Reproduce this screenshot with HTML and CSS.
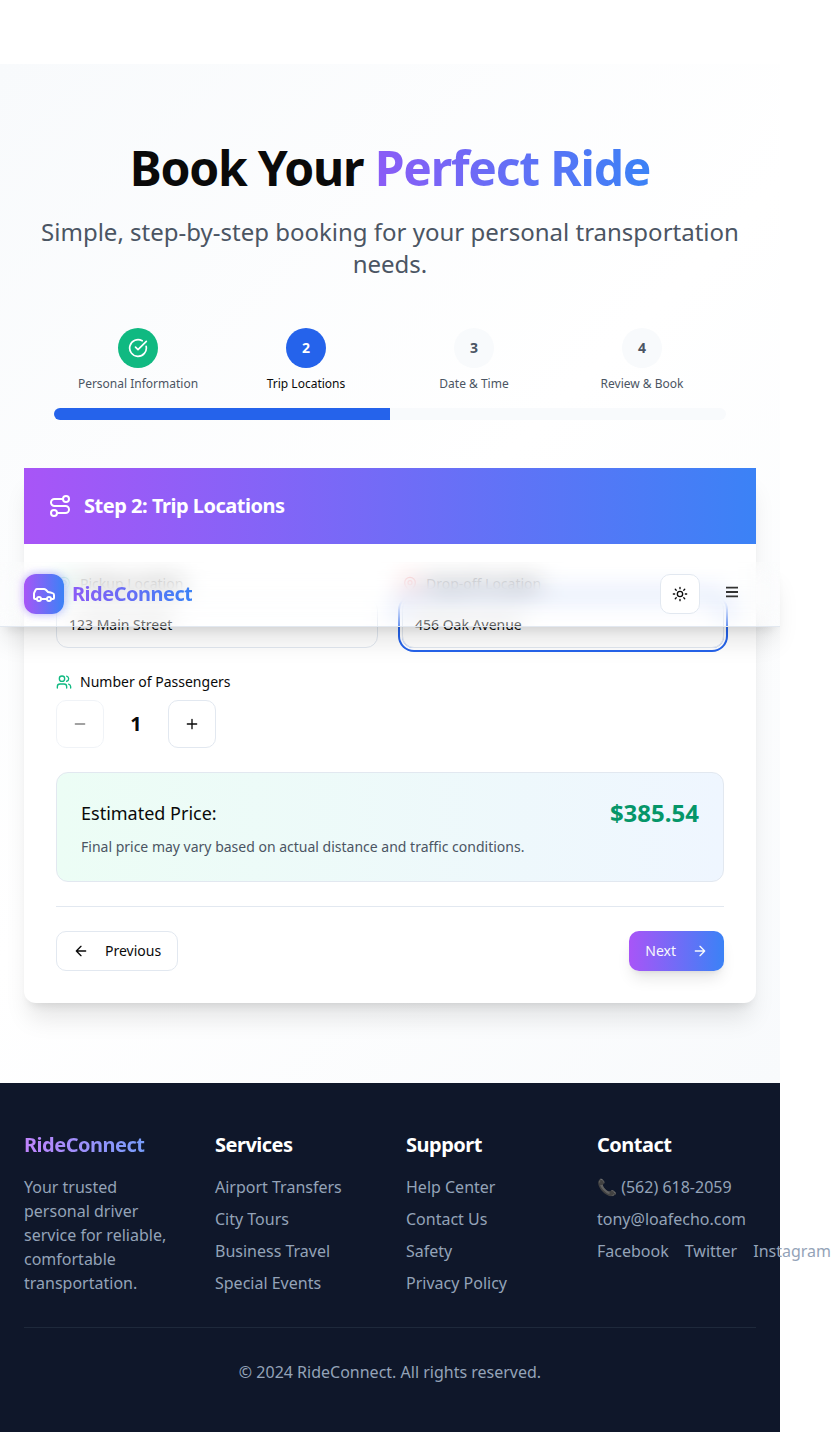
FILE: index.html
```html
<!DOCTYPE html>
<html lang="en">
<head>
<meta charset="utf-8">
<title>RideConnect</title>
<link rel="stylesheet" href="styles.css">
</head>
<body>
<div class="app">
  <header class="navbar">
    <div class="brand"><span class="brand-mark"><svg class="icon s24" viewBox="0 0 24 24"><path d="M19 17h2c.6 0 1-.4 1-1v-3c0-.9-.7-1.700-1.500-1.900C18.700 10.600 16 10 16 10s-1.300-1.400-2.200-2.300c-.5-.4-1.100-.7-1.800-.7H5c-.6 0-1.100.4-1.400.9l-1.400 2.900A3.700 3.700 0 0 0 2 12v4c0 .6.4 1 1 1h2"/><circle cx="7" cy="17" r="2"/><path d="M9 17h6"/><circle cx="17" cy="17" r="2"/></svg></span><span class="brand-name">RideConnect</span></div>
    <div class="nav-actions">
      <button class="theme"><svg class="icon s16" viewBox="0 0 24 24"><circle cx="12" cy="12" r="4"/><path d="M12 2v2M12 20v2M4.930 4.930l1.410 1.410M17.660 17.660l1.410 1.410M2 12h2M20 12h2M6.340 17.660l-1.410 1.410M19.070 4.930l-1.410 1.410"/></svg></button>
      <button class="menu"><svg class="icon s16 bars" viewBox="0 0 24 24"><path d="M3 5.500h18M3 12h18M3 18.500h18"/></svg></button>
    </div>
  </header>
  <main class="booking">
    <h1>Book Your <span>Perfect Ride</span></h1>
    <p class="lead">Simple, step-by-step booking for your personal transportation needs.</p>
    <div class="progress">
      <ol class="steps">
        <li><span class="dot done"><svg class="icon s20" viewBox="0 0 24 24"><path d="M21.801 10A10 10 0 1 1 17 3.335"/><path d="m9 11 3 3L22 4"/></svg></span><span>Personal Information</span></li>
        <li class="current"><span class="dot active">2</span><span>Trip Locations</span></li>
        <li><span class="dot">3</span><span>Date &amp; Time</span></li>
        <li><span class="dot">4</span><span>Review &amp; Book</span></li>
      </ol>
      <div class="track"><div class="fill"></div></div>
    </div>
    <section class="card">
      <div class="card-head"><svg class="icon s24" viewBox="0 0 24 24"><circle cx="6" cy="19" r="3"/><path d="M9 19h8.500a3.500 3.500 0 0 0 0-7h-11a3.500 3.500 0 0 1 0-7H15"/><circle cx="18" cy="5" r="3"/></svg><h2>Step 2: Trip Locations</h2></div>
      <div class="card-body">
        <div class="fields">
          <div class="field"><label><svg class="icon s16 green" viewBox="0 0 24 24"><path d="M20 10c0 5-5.500 10.200-7.400 11.800a1 1 0 0 1-1.200 0C9.500 20.200 4 15 4 10a8 8 0 0 1 16 0"/><circle cx="12" cy="10" r="3"/></svg>Pickup Location</label><div class="input">123 Main Street</div></div>
          <div class="field"><label><svg class="icon s16 red" viewBox="0 0 24 24"><path d="M20 10c0 5-5.500 10.200-7.400 11.800a1 1 0 0 1-1.200 0C9.500 20.200 4 15 4 10a8 8 0 0 1 16 0"/><circle cx="12" cy="10" r="3"/></svg>Drop-off Location</label><div class="input focused">456 Oak Avenue</div></div>
        </div>
        <div class="passengers">
          <label><svg class="icon s16 green" viewBox="0 0 24 24"><path d="M16 21v-2a4 4 0 0 0-4-4H6a4 4 0 0 0-4 4v2"/><circle cx="9" cy="7" r="4"/><path d="M22 21v-2a4 4 0 0 0-3-3.870M16 3.130a4 4 0 0 1 0 7.750"/></svg>Number of Passengers</label>
          <div class="counter"><button class="square disabled"><svg class="icon s16" viewBox="0 0 24 24"><path d="M5 12h14"/></svg></button><strong>1</strong><button class="square"><svg class="icon s16" viewBox="0 0 24 24"><path d="M5 12h14M12 5v14"/></svg></button></div>
        </div>
        <div class="estimate"><div class="estimate-row"><span>Estimated Price:</span><strong>$385.54</strong></div><p>Final price may vary based on actual distance and traffic conditions.</p></div>
        <div class="actions">
          <button class="btn"><svg class="icon s16" viewBox="0 0 24 24"><path d="m12 19-7-7 7-7M19 12H5"/></svg>Previous</button>
          <button class="btn primary">Next<svg class="icon s16" viewBox="0 0 24 24"><path d="M5 12h14M12 5l7 7-7 7"/></svg></button>
        </div>
      </div>
    </section>
  </main>
  <footer>
    <div class="columns">
      <div><h3 class="footer-brand">RideConnect</h3><p>Your trusted personal driver service for reliable, comfortable transportation.</p></div>
      <div><h3>Services</h3><ul><li>Airport Transfers</li><li>City Tours</li><li>Business Travel</li><li>Special Events</li></ul></div>
      <div><h3>Support</h3><ul><li>Help Center</li><li>Contact Us</li><li>Safety</li><li>Privacy Policy</li></ul></div>
      <div><h3>Contact</h3><ul><li>📞 (562) 618-2059</li><li>tony@loafecho.com</li><li class="social"><span>Facebook</span><span>Twitter</span><span>Instagram</span></li></ul></div>
    </div>
    <p class="copyright">© 2024 RideConnect. All rights reserved.</p>
  </footer>
</div>
</body>
</html>
```
FILE: styles.css
```css
* { box-sizing: border-box; margin: 0; padding: 0; }
html { background: #fff; }
body { font: 16px/24px "Noto Sans", sans-serif; color: #0a0a0a; height: 1432px; overflow: hidden; }
ul, ol { list-style: none; }
button { font: inherit; color: inherit; background: #fff; border: 0; display: flex; align-items: center; justify-content: center; }
.app { width: 780px; height: 1432px; padding-top: 64px; position: relative; }
.icon { fill: none; stroke: currentColor; stroke-width: 2; stroke-linecap: round; stroke-linejoin: round; flex: none; display: block; }
.s16 { width: 16px; height: 16px; }
.s20 { width: 20px; height: 20px; }
.s24 { width: 24px; height: 24px; }
.green { color: #10b981; }
.red { color: #ef4444; }

.navbar { position: absolute; z-index: 5; left: 0; top: 562px; width: 780px; height: 65px; padding: 0 24px; display: flex; align-items: center; justify-content: space-between; border-bottom: 1px solid #e2e8f0; box-shadow: 0 20px 25px -5px #0000001a, 0 8px 10px -6px #0000001a; }
.navbar::before { content: ""; position: absolute; z-index: -1; inset: 0; background: #ffffff1a; backdrop-filter: blur(12px); -webkit-mask-image: linear-gradient(#000000e8, #000000f3 32%, #000 42%, #000 61%, #0009); mask-image: linear-gradient(#000000e8, #000000f3 32%, #000 42%, #000 61%, #0009); }
.brand { display: flex; align-items: center; gap: 8px; }
.brand-mark { width: 40px; height: 40px; border-radius: 12px; display: grid; place-items: center; color: #fff; background: linear-gradient(90deg, #a855f7, #3b82f6); box-shadow: -2px 0 8px #a855f74d, 2px 0 8px #3b82f64d; }
.brand-name, .footer-brand, h1 span { color: transparent; background: linear-gradient(90deg, #8b5cf6, #3b82f6); -webkit-background-clip: text; background-clip: text; }
.brand-name { font-size: 20px; line-height: 28px; font-weight: 700; letter-spacing: -.5px; }
.nav-actions { display: flex; align-items: center; gap: 12px; }
.theme { width: 40px; height: 40px; border: 1px solid #e2e8f0; border-radius: 10px; }
.menu { width: 40px; height: 40px; background: transparent; padding-bottom: 4px; margin-right: 4px; }
.bars { stroke-width: 2.8; stroke-linecap: butt; color: #333; }

.booking { height: 1019px; padding: 72px 24px 80px; background: linear-gradient(135deg, #f8fafc, #fff 50%, #f8fafc); }
h1 { font-size: 48px; line-height: 64px; font-weight: 700; letter-spacing: -1.2px; text-align: center; }
.lead { margin-top: 16px; font-size: 24px; line-height: 32px; color: #4b5563; text-align: center; }
.progress { margin: 48px 30px 0; }
.steps { display: grid; grid-template-columns: repeat(4, 1fr); }
.steps li { display: flex; flex-direction: column; align-items: center; gap: 8px; font-size: 12px; line-height: 16px; color: #4b5563; }
.steps .current { color: #0a0a0a; }
.dot { width: 40px; height: 40px; border-radius: 50%; background: #f8fafc; display: grid; place-items: center; font-size: 14px; font-weight: 700; color: #4b5563; }
.done { background: #10b981; color: #fff; }
.active { background: #2563eb; color: #fff; }
.track { margin-top: 16px; height: 12px; border-radius: 6px; overflow: hidden; background: #f8fafc; }
.fill { width: 50%; height: 100%; background: #2563eb; }

.card { margin-top: 48px; height: 535px; background: #fff; border-radius: 0 0 12px 12px; box-shadow: 0 20px 25px -5px #0000001a, 0 8px 10px -6px #0000001a; }
.card-head { height: 76px; padding: 0 24px; display: flex; align-items: center; gap: 12px; color: #fff; background: linear-gradient(90deg, #a855f7, #3b82f6); }
h2 { font-size: 20px; line-height: 28px; font-weight: 700; letter-spacing: -.48px; }
.card-body { padding: 32px; }
.fields { display: grid; grid-template-columns: 1fr 1fr; gap: 24px; }
label { display: flex; align-items: center; gap: 8px; font-size: 14px; line-height: 20px; }
.field label { height: 16px; margin-bottom: 6px; }
.input { height: 50px; border: 1px solid #e2e8f0; border-radius: 12px; padding: 4px 12px 0; display: flex; align-items: center; font-size: 14px; }
.focused { box-shadow: 0 0 0 2px #fff, 0 0 0 4px #2563eb; }
.passengers { margin-top: 24px; }
.counter { margin-top: 8px; display: flex; align-items: center; }
.square { width: 48px; height: 48px; border: 1px solid #e2e8f0; border-radius: 10px; }
.disabled { opacity: .5; }
.counter strong { width: 64px; text-align: center; font-size: 20px; font-weight: 700; }
.estimate { height: 110px; margin-top: 24px; padding: 24px; border: 1px solid #e2e8f0; border-radius: 12px; background: linear-gradient(90deg, #ecfdf5, #eff6ff); }
.estimate-row { display: flex; align-items: center; justify-content: space-between; height: 32px; font-size: 18px; }
.estimate-row strong { font-size: 24px; color: #059669; }
.estimate p { margin-top: 8px; font-size: 14px; line-height: 20px; color: #4b5563; }
.actions { display: flex; justify-content: space-between; margin-top: 24px; padding-top: 24px; border-top: 1px solid #e2e8f0; }
.btn { height: 40px; padding: 0 16px; gap: 16px; border: 1px solid #e2e8f0; border-radius: 10px; font-size: 14px; }
.primary { border: 0; color: #f8fafc; background: linear-gradient(90deg, #a855f7, #3b82f6); box-shadow: 0 10px 15px -3px #0000001a, 0 4px 6px -4px #0000001a; }

footer { height: 349px; padding: 48px 24px 0; background: #0f172a; color: #94a3b8; }
.columns { display: grid; grid-template-columns: repeat(4, 159px); gap: 32px; }
h3 { font-size: 20px; line-height: 28px; font-weight: 700; letter-spacing: -.5px; color: #fff; margin-bottom: 16px; }
.footer-brand { color: transparent; background-image: linear-gradient(90deg, #c084fc, #60a5fa); }
footer ul { display: flex; flex-direction: column; gap: 8px; }
.social { display: flex; gap: 16px; }
.copyright { margin-top: 32px; border-top: 1px solid #1e293b; padding-top: 32px; text-align: center; }
```
